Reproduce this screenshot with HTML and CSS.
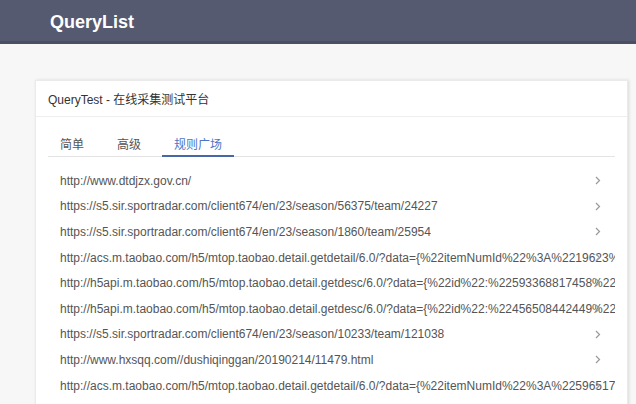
FILE: index.html
```html
<!DOCTYPE html>
<html lang="zh-CN">
<head>
    <meta charset="UTF-8">
    <meta name="viewport" content="width=device-width, initial-scale=1.0">
    <title>QueryList</title>
    <link rel="stylesheet" href="styles.css">
</head>
<body>
    <header class="topbar">
        <div class="brand">QueryList</div>
    </header>

    <main class="main">
        <div class="card">
            <div class="card-header">QueryTest - 在线采集测试平台</div>

            <div class="tabs">
                <div class="tab">简单</div>
                <div class="tab">高级</div>
                <div class="tab tab-active">规则广场</div>
            </div>

            <ul class="rule-list">
                <li class="rule"><span class="rule-url">http://www.dtdjzx.gov.cn/</span><svg class="chevron" width="6" height="9" viewBox="0 0 6 9"><polyline points="1,1 4.5,4.5 1,8" /></svg></li>
                <li class="rule"><span class="rule-url">https://s5.sir.sportradar.com/client674/en/23/season/56375/team/24227</span><svg class="chevron" width="6" height="9" viewBox="0 0 6 9"><polyline points="1,1 4.5,4.5 1,8" /></svg></li>
                <li class="rule"><span class="rule-url">https://s5.sir.sportradar.com/client674/en/23/season/1860/team/25954</span><svg class="chevron" width="6" height="9" viewBox="0 0 6 9"><polyline points="1,1 4.5,4.5 1,8" /></svg></li>
                <li class="rule"><span class="rule-url">http://acs.m.taobao.com/h5/mtop.taobao.detail.getdetail/6.0/?data={%22itemNumId%22%3A%2219623%22}</span><svg class="chevron" width="6" height="9" viewBox="0 0 6 9"><polyline points="1,1 4.5,4.5 1,8" /></svg></li>
                <li class="rule"><span class="rule-url">http://h5api.m.taobao.com/h5/mtop.taobao.detail.getdesc/6.0/?data={%22id%22:%22593368817458%22}</span><svg class="chevron" width="6" height="9" viewBox="0 0 6 9"><polyline points="1,1 4.5,4.5 1,8" /></svg></li>
                <li class="rule"><span class="rule-url">http://h5api.m.taobao.com/h5/mtop.taobao.detail.getdesc/6.0/?data={%22id%22:%22456508442449%22}</span><svg class="chevron" width="6" height="9" viewBox="0 0 6 9"><polyline points="1,1 4.5,4.5 1,8" /></svg></li>
                <li class="rule"><span class="rule-url">https://s5.sir.sportradar.com/client674/en/23/season/10233/team/121038</span><svg class="chevron" width="6" height="9" viewBox="0 0 6 9"><polyline points="1,1 4.5,4.5 1,8" /></svg></li>
                <li class="rule"><span class="rule-url">http://www.hxsqq.com//dushiqinggan/20190214/11479.html</span><svg class="chevron" width="6" height="9" viewBox="0 0 6 9"><polyline points="1,1 4.5,4.5 1,8" /></svg></li>
                <li class="rule"><span class="rule-url">http://acs.m.taobao.com/h5/mtop.taobao.detail.getdetail/6.0/?data={%22itemNumId%22%3A%22596517%22}</span><svg class="chevron" width="6" height="9" viewBox="0 0 6 9"><polyline points="1,1 4.5,4.5 1,8" /></svg></li>
            </ul>
        </div>
    </main>
</body>
</html>
```

FILE: styles.css
```css
* {
    margin: 0;
    padding: 0;
    box-sizing: border-box;
}

body {
    background: #f7f7f7;
    font-family: "Liberation Sans", Arial, "Noto Sans CJK SC", sans-serif;
    color: #555;
    font-size: 12px;
    overflow: hidden;
}

.topbar {
    height: 44px;
    background: #565a71;
    border-bottom: 3px solid #4b4f63;
    padding-left: 50px;
    display: flex;
    align-items: center;
}

.brand {
    color: #fff;
    font-size: 18px;
    font-weight: bold;
    padding-top: 3px;
}

.main {
    padding: 36px 8px 0 35px;
}

.card {
    background: #fff;
    border: 1px solid #ebebeb;
    box-shadow: 1px 0 3px rgba(0, 0, 0, 0.12);
    height: 340px;
}

.card-header {
    height: 36px;
    display: flex;
    align-items: center;
    padding-left: 12px;
    color: #333;
    font-size: 12px;
    border-bottom: 1px solid #eee;
}

.tabs {
    margin: 0 12px;
    height: 40px;
    display: flex;
    gap: 9px;
    border-bottom: 1px solid #e4e4e4;
}

.tab {
    padding: 14px 12px 0;
    display: flex;
    align-items: center;
    color: #555;
    font-size: 12px;
    margin-bottom: -1px;
    border-bottom: 2px solid transparent;
}

.tab-active {
    color: #4e74c6;
    border-bottom-color: #4767a8;
}

.rule-list {
    list-style: none;
    margin: 0 12px;
    padding-top: 11px;
}

.rule {
    position: relative;
    height: 25.6px;
    display: flex;
    align-items: center;
    padding-left: 12px;
    overflow: hidden;
    white-space: nowrap;
}

.rule-url {
    color: #555;
}

.chevron {
    position: absolute;
    right: 14px;
    top: 8px;
    fill: none;
    stroke: #999;
    stroke-width: 1.2;
}
```
